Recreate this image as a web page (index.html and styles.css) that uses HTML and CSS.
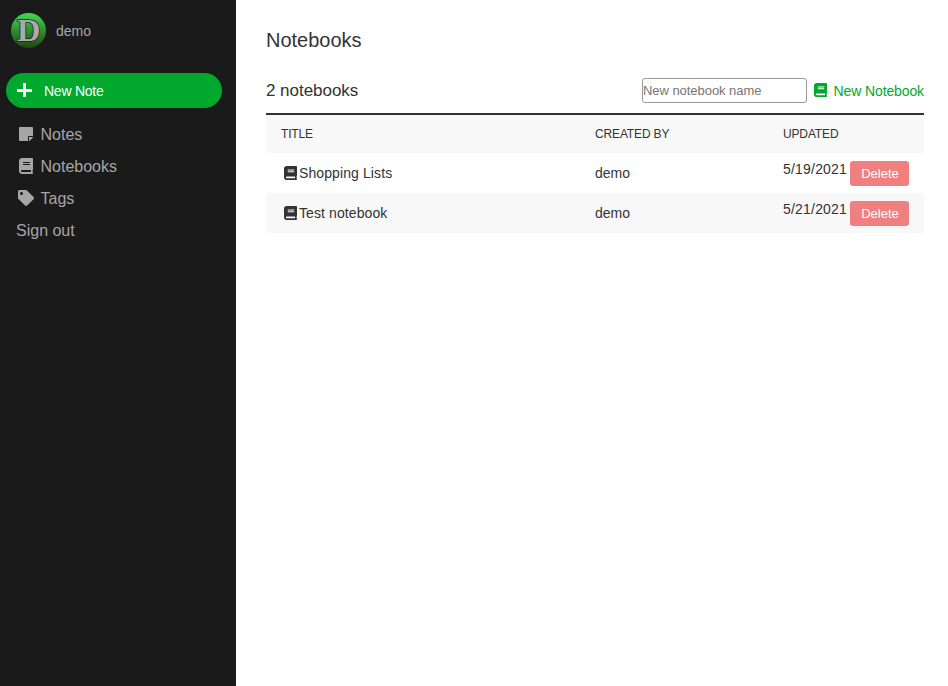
FILE: index.html
```html
<!DOCTYPE html>
<html lang="en">
<head>
<meta charset="utf-8">
<title>Notebooks</title>
<link rel="stylesheet" href="styles.css">
</head>
<body>
<svg class="defs" aria-hidden="true">
  <symbol id="book" viewBox="0 0 448 512" preserveAspectRatio="none"><path fill="currentColor" d="M448 360V24c0-13.300-10.700-24-24-24H96C43 0 0 43 0 96v320c0 53 43 96 96 96h328c13.300 0 24-10.700 24-24v-16c0-7.500-3.500-14.300-8.900-18.700-4.200-15.400-4.200-59.300 0-74.700 5.400-4.300 8.900-11.100 8.900-18.600zM128 134c0-3.300 2.700-6 6-6h212c3.300 0 6 2.700 6 6v20c0 3.300-2.700 6-6 6H134c-3.300 0-6-2.700-6-6v-20zm0 64c0-3.300 2.700-6 6-6h212c3.300 0 6 2.700 6 6v20c0 3.300-2.700 6-6 6H134c-3.300 0-6-2.700-6-6v-20zm253.400 250H96c-17.700 0-32-14.300-32-32 0-17.600 14.400-32 32-32h285.400c-1.900 17.100-1.900 46.900 0 64z"/></symbol>
</svg>
<div class="app">
  <aside class="sidebar">
    <div class="user">
      <svg class="avatar" viewBox="0 0 36 36">
        <defs><linearGradient id="g" x1="0" y1="0" x2="0" y2="1"><stop offset="0" stop-color="#43d854"/><stop offset=".5" stop-color="#2f8f32"/><stop offset="1" stop-color="#23460f"/></linearGradient></defs>
        <circle cx="17.500" cy="17.500" r="17.500" fill="url(#g)"/>
        <text class="avatar-letter" x="6" y="28" textLength="23.500" lengthAdjust="spacingAndGlyphs">D</text>
      </svg>
      <span>demo</span>
    </div>
    <button class="new-note">
      <svg class="plus" viewBox="0 0 15 15"><path d="M7.500 0v14M0 7.500h15" stroke="currentColor" stroke-width="3"/></svg>
      <span>New Note</span>
    </button>
    <nav class="nav">
      <a><svg class="note-icon" viewBox="0 0 448 512"><path fill="currentColor" d="M312 320h136V56c0-13.300-10.700-24-24-24H24C10.700 32 0 42.700 0 56v400c0 13.300 10.700 24 24 24h264V344c0-13.200 10.800-24 24-24zm129 55l-98 98c-4.500 4.500-10.600 7-17 7h-6V352h128v6.100c0 6.300-2.500 12.400-7 16.900z"/></svg>Notes</a>
      <a><svg class="book-icon"><use href="#book"/></svg>Notebooks</a>
      <a><svg class="tag-icon" viewBox="0 0 512 512"><path fill="currentColor" d="M0 252.100V48C0 21.500 21.500 0 48 0h204.100a48 48 0 0 1 33.900 14.100l211.900 211.900c18.700 18.700 18.700 49.100 0 67.900L293.800 497.900c-18.700 18.700-49.100 18.700-67.900 0L14.100 286.100A48 48 0 0 1 0 252.100zM112 64c-26.500 0-48 21.500-48 48s21.500 48 48 48 48-21.500 48-48-21.500-48-48-48z"/></svg>Tags</a>
      <a>Sign out</a>
    </nav>
  </aside>
  <main class="main">
    <h1>Notebooks</h1>
    <div class="toolbar">
      <h2>2 notebooks</h2>
      <input type="text" placeholder="New notebook name">
      <button class="create"><svg class="small-book"><use href="#book"/></svg>New Notebook</button>
    </div>
    <div class="table">
      <div class="row head"><span>TITLE</span><span>CREATED BY</span><span>UPDATED</span></div>
      <div class="row"><span class="title"><svg class="small-book"><use href="#book"/></svg>Shopping Lists</span><span>demo</span><span class="updated"><span class="date">5/19/2021</span><button class="delete">Delete</button></span></div>
      <div class="row shaded"><span class="title"><svg class="small-book"><use href="#book"/></svg>Test notebook</span><span>demo</span><span class="updated"><span class="date">5/21/2021</span><button class="delete">Delete</button></span></div>
    </div>
  </main>
</div>
</body>
</html>
```
FILE: styles.css
```css
* { box-sizing: border-box; }
body { margin: 0; font: 14px/16px "Liberation Sans", Arial, sans-serif; color: #333; background: #fff; }
button { border: 0; margin: 0; font-family: inherit; }
.defs { position: absolute; width: 0; height: 0; }
.app { display: flex; height: 686px; }
.sidebar { width: 236px; flex: none; background: #1a1a1a; color: #a6a6a6; padding: 12px 14px 0 6px; }
.user { display: flex; align-items: center; gap: 9px; height: 37px; padding-left: 5px; }
.avatar { width: 36px; height: 36px; }
.avatar-letter { font: bold 32px "Liberation Serif", serif; fill: #aaa; stroke: #222; stroke-width: 1.5px; paint-order: stroke; }
.new-note { display: flex; align-items: center; gap: 12px; width: 216px; height: 35px; margin-top: 24px; padding: 0 11px; border-radius: 18px; background: #00a82d; color: #fff; font-size: 14px; letter-spacing: -0.25px; }
.plus { width: 15px; height: 15px; }
.nav { margin-top: 11px; padding-left: 10px; font-size: 16px; }
.nav a { display: flex; align-items: center; height: 32px; }
.note-icon { width: 14px; height: 16px; margin: 0 7.5px 2px 3px; }
.book-icon { width: 14px; height: 16px; margin: 0 7.5px 2px 3px; }
.tag-icon { width: 16px; height: 16px; margin: 0 6.5px 2px 2px; }
.main { flex: 1; padding: 28px 24px 0 30px; }
h1, h2 { margin: 0; font-weight: 400; }
h1 { font-size: 20px; line-height: 24px; }
.toolbar { display: flex; align-items: center; height: 25px; margin: 26px 0 10px; }
h2 { flex: 1; font-size: 17px; line-height: 20px; letter-spacing: -0.03px; }
input { width: 165px; height: 25px; padding: 0; border: 1px solid #999; border-radius: 3px; font: 13px "Liberation Sans", Arial, sans-serif; letter-spacing: -0.04px; }
input::placeholder { color: #757575; }
.create { display: flex; align-items: center; padding: 0; background: none; color: #00a82d; font-size: 14px; letter-spacing: -0.12px; }
.small-book { width: 13px; height: 14px; flex: none; }
.create .small-book { margin: 0 6.5px 2px 7.2px; }
.table { border-top: 2px solid #333; }
.row { display: grid; grid-template-columns: 314px 188px 126px; align-items: center; height: 40px; padding: 0 15px; }
.head { height: 38px; font-size: 12px; letter-spacing: -0.15px; background: #f8f8f8; }
.shaded { background: #f8f8f8; }
.title { display: flex; align-items: center; letter-spacing: 0.1px; }
.title .small-book { margin: 0 2.500px 0 2.500px; }
.updated { display: flex; align-items: center; justify-content: space-between; }
.date { margin-bottom: 8px; letter-spacing: 0.2px; }
.delete { width: 59px; height: 25px; padding: 0 0 0 1px; border-radius: 3px; background: #f08080; color: #fff; font-size: 13px; }
```
